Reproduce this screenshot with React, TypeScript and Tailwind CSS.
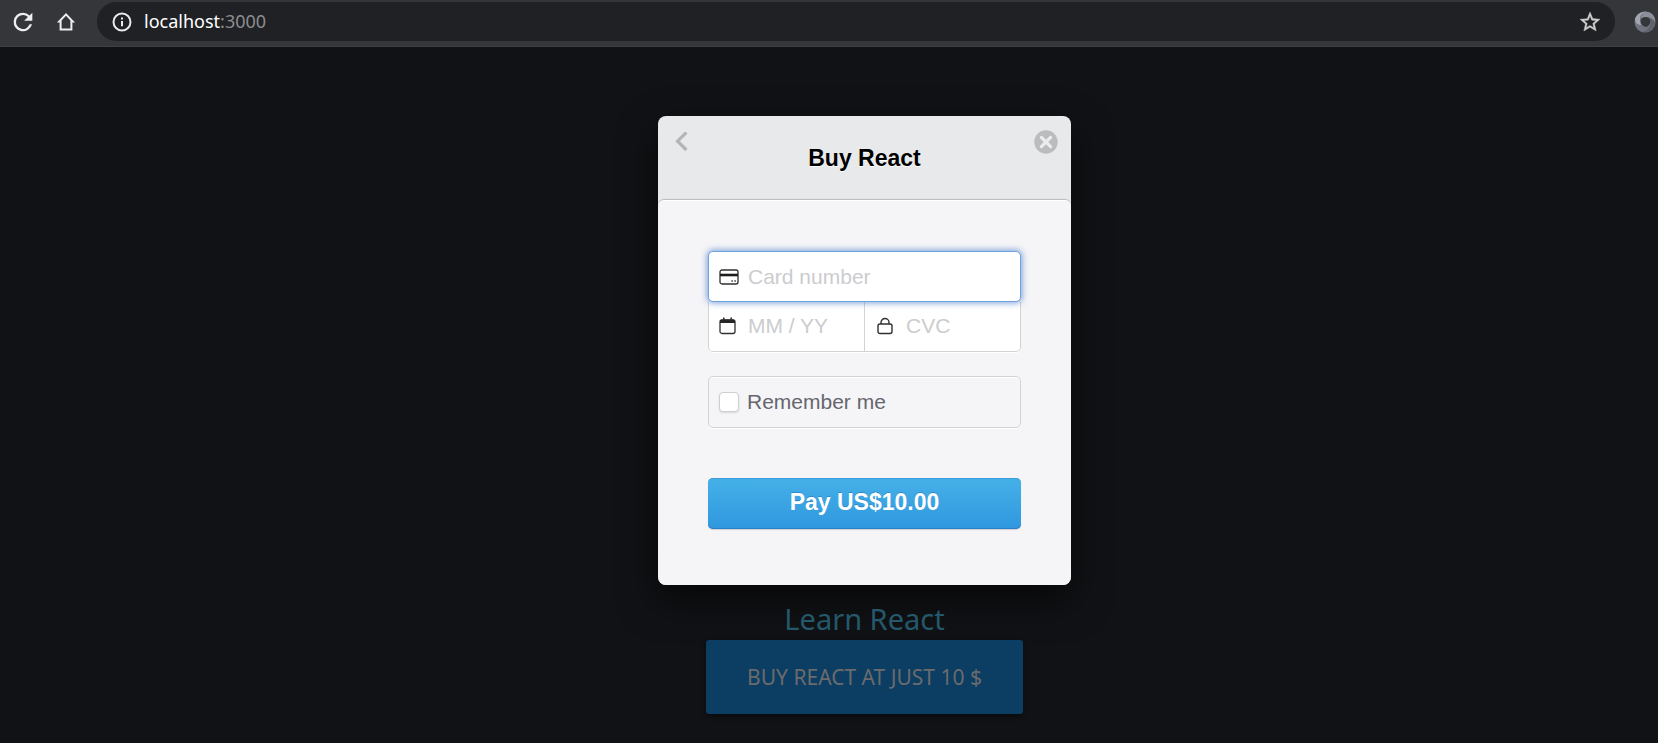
import React from 'react';

const ReloadIcon = () => (
  <svg className="size-[28px]" viewBox="0 0 24 24" fill="#eceef0" aria-hidden="true">
    <path d="M17.65 6.35A7.96 7.96 0 0 0 12 4a8 8 0 1 0 7.73 10h-2.08A6 6 0 1 1 12 6c1.66 0 3.14.69 4.22 1.78L13 11h7V4z" />
  </svg>
);

const HomeIcon = () => (
  <svg className="size-[20px]" viewBox="0 0 20 20" fill="none" stroke="#eceef0" strokeWidth="2" aria-hidden="true">
    <path d="M4.6 9.6H3.2L10 2.4l6.8 7.2h-1.4v8H4.6z" />
  </svg>
);

const InfoIcon = () => (
  <svg className="size-[20px] shrink-0" viewBox="0 0 20 20" fill="none" aria-hidden="true">
    <circle cx="10" cy="10" r="8.5" stroke="#e8eaed" strokeWidth="2" />
    <path d="M10 9v5.2M10 5.4v2.1" stroke="#e8eaed" strokeWidth="2" />
  </svg>
);

const StarIcon = () => (
  <svg className="size-[24px]" viewBox="0 0 24 24" fill="#cfcfcf" stroke="#cfcfcf" strokeWidth="0.4" aria-hidden="true">
    <path d="m22 9.24-7.19-.62L12 2 9.19 8.63 2 9.24l5.46 4.73L5.82 21 12 17.27 18.18 21l-1.63-7.03zM12 15.4l-3.76 2.27 1-4.28-3.32-2.88 4.38-.38L12 6.1l1.71 4.04 4.38.38-3.32 2.88 1 4.28z" />
  </svg>
);

const ExtensionIcon = () => (
  <svg className="size-[22px]" viewBox="0 0 22 22" aria-hidden="true">
    <circle cx="11" cy="11" r="10.5" fill="#70747f" />
    <path d="M1 8C3 2 9 0 14 1c-4 0-8 2-8 7 0 2 0 4 1 6-4 0-6-3-6-6z" fill="#a3a6b0" />
    <path d="M14 1c5 1 8 6 7 11-1-4-4-6-8-6-3 0-5 1-6 3 0-5 3-8 7-8z" fill="#8d909b" />
    <path d="M21 12c-1 6-7 10-13 9 5-1 8-4 8-9l-1-4c4 0 6 2 6 4z" fill="#5f636f" />
    <path d="M7 8c3-3 7-2 9 0 1 4-1 7-4 8-4-1-6-4-5-8z" fill="#35363a" />
  </svg>
);

const CardIcon = () => (
  <svg className="h-[16px] w-[20px]" viewBox="0 0 20 16" fill="none" aria-hidden="true">
    <rect x="1" y="1" width="18" height="14" rx="2" stroke="#303030" strokeWidth="1.3" />
    <path d="M1 6h18" stroke="#1c1c1c" strokeWidth="2.6" />
    <path d="M12.4 12h1.4M15.4 12h1.4" stroke="#303030" strokeWidth="1.4" />
  </svg>
);

const CalendarIcon = () => (
  <svg className="h-[18px] w-[17px]" viewBox="0 0 17 18" fill="none" aria-hidden="true">
    <rect x="1" y="3" width="15" height="13.5" rx="2" stroke="#303030" strokeWidth="1.3" />
    <path d="M1 4.5a2 2 0 0 1 2-2h11a2 2 0 0 1 2 2V6H1z" fill="#262626" />
    <path d="M4.8 .6v2M12.2 .6v2" stroke="#303030" strokeWidth="1.6" />
  </svg>
);

const LockIcon = () => (
  <svg className="h-[18px] w-[16px]" viewBox="0 0 16 18" fill="none" stroke="#303030" strokeWidth="1.4" aria-hidden="true">
    <rect x="1" y="7" width="14" height="9.5" rx="2" />
    <path d="M4 7V5.5a4 4 0 0 1 8 0V7" />
  </svg>
);

type FieldProps = {
  id: string;
  label: string;
  className: string;
  icon: React.ReactNode;
};

const Field = ({ id, label, className, icon }: FieldProps) => (
  <div className={className}>
    <label htmlFor={id} className="flex w-[29px] shrink-0 items-center" aria-label={label}>
      {icon}
    </label>
    <input
      id={id}
      placeholder={label}
      className="h-full w-full min-w-0 bg-transparent text-[21px] text-black outline-none placeholder:text-[#cccccf]"
    />
  </div>
);

const Toolbar = () => (
  <header className="flex h-[47px] items-start overflow-hidden border-b border-[#3f4043] bg-[#35363a] pt-[2px]">
    <div className="flex h-[39px] w-[97px] shrink-0 items-center pl-[9px]">
      <button type="button" aria-label="Reload">
        <ReloadIcon />
      </button>
      <button type="button" aria-label="Home" className="ml-[19px]">
        <HomeIcon />
      </button>
    </div>
    <div className="flex h-[39px] min-w-0 flex-1 items-center rounded-full bg-[#202124] pr-[13px] pl-[15px]">
      <InfoIcon />
      <p className="ml-[12px] flex-1 pb-[2px] font-['Noto_Sans',sans-serif] text-[18px] leading-6 text-white">
        localhost<span className="text-[#8b8d91]">:3000</span>
      </p>
      <button type="button" aria-label="Bookmark this page">
        <StarIcon />
      </button>
    </div>
    <div className="flex h-[39px] w-[43px] shrink-0 items-center pl-[19px]">
      <button type="button" aria-label="Extension">
        <ExtensionIcon />
      </button>
    </div>
  </header>
);

const Checkout = () => (
  <section
    role="dialog"
    aria-labelledby="checkout-title"
    className="w-[413px] overflow-hidden rounded-[8px] bg-[#e8e9eb] font-['Liberation_Sans',Arial,sans-serif] shadow-[0_15px_38px_rgba(0,0,0,0.6)]"
  >
    <div className="flex h-[84px] items-start justify-between px-[13px] pt-[14px]">
      <button type="button" aria-label="Back" className="flex size-[24px] items-center justify-start pl-[4px]">
        <svg className="h-[20px] w-[13px]" viewBox="0 0 13 20" fill="none" aria-hidden="true">
          <path d="m11.4 .4-8.8 8.8 8.8 8.8" stroke="#b4b5b7" strokeWidth="3.2" />
        </svg>
      </button>
      <h1
        id="checkout-title"
        className="pt-[14px] text-[23px] leading-[28px] font-bold text-black [text-shadow:0_1px_0_#fff]"
      >
        Buy React
      </h1>
      <button type="button" aria-label="Close" className="size-[24px]">
        <svg className="size-[24px]" viewBox="0 0 24 24" aria-hidden="true">
          <circle cx="12" cy="12" r="11.7" fill="#bbbcbd" />
          <path d="m7.4 7.4 9.2 9.2M16.6 7.4l-9.2 9.2" stroke="#ececee" strokeWidth="3.2" strokeLinecap="round" />
        </svg>
      </button>
    </div>
    <form
      className="rounded-t-[6px] border-t border-white bg-[#f5f5f7] px-[50px] pt-[50px] pb-[56px] shadow-[0_-1px_1px_rgba(0,0,0,0.2)]"
      onSubmit={(event) => event.preventDefault()}
    >
      <Field
        id="card"
        label="Card number"
        icon={<CardIcon />}
        className="relative flex h-[51px] items-center rounded-[5px] border border-[#6ea4e4] bg-white px-[10px] shadow-[0_0_6px_1px_rgba(70,120,200,0.7)]"
      />
      <div className="flex h-[50px] rounded-b-[5px] border border-t-0 border-[#d3d3d6] bg-white shadow-[0_1px_0_#fff]">
        <Field
          id="expiry"
          label="MM / YY"
          icon={<CalendarIcon />}
          className="flex w-[156px] items-center border-r border-[#d3d3d6] pr-[8px] pb-[2px] pl-[10px]"
        />
        <Field
          id="cvc"
          label="CVC"
          icon={<LockIcon />}
          className="flex flex-1 items-center pr-[8px] pb-[2px] pl-[12px]"
        />
      </div>
      <label className="mt-[24px] flex h-[52px] items-center rounded-[5px] border border-[#d3d3d6] pl-[10px] shadow-[0_1px_0_#fff,inset_0_1px_0_#fff]">
        <input
          type="checkbox"
          className="size-[20px] appearance-none rounded-[4px] border border-[#cfcfd2] bg-white shadow-[0_1px_2px_rgba(0,0,0,0.12)] checked:bg-[#3a9fe2]"
        />
        <span className="ml-[8px] text-[21px] leading-[24px] text-[#66666e]">Remember me</span>
      </label>
      <button
        type="submit"
        className="mt-[50px] block h-[51px] w-full rounded-[5px] bg-linear-to-b from-[#45b1e8] to-[#3097de] pb-[3px] text-[23px] font-bold text-white shadow-[inset_0_1px_0_#3b9ddb,inset_0_-1px_0_#2a7fc9,0_1px_1px_rgba(0,0,0,0.15)] [text-shadow:0_-1px_0_rgba(0,70,140,0.3)]"
      >
        Pay US$10.00
      </button>
    </form>
  </section>
);

export default function App() {
  return (
    <div className="flex min-h-screen flex-col bg-[#111215]">
      <Toolbar />
      <main className="flex flex-1 flex-col items-center pt-[69px] pb-[28px] pl-[71px] font-['Noto_Sans',sans-serif]">
        <Checkout />
        <a href="#learn" className="mt-[15px] pb-[2px] text-[29px] leading-[38px] text-[#24586a]">
          Learn React
        </a>
        <button
          type="button"
          className="h-[74px] w-[317px] rounded-[3px] bg-[#0c3d62] pt-[2px] text-[21px] text-[#6b6b6d] shadow-[0_2px_5px_rgba(0,0,0,0.5)]"
        >
          BUY REACT AT JUST 10 $
        </button>
      </main>
    </div>
  );
}
